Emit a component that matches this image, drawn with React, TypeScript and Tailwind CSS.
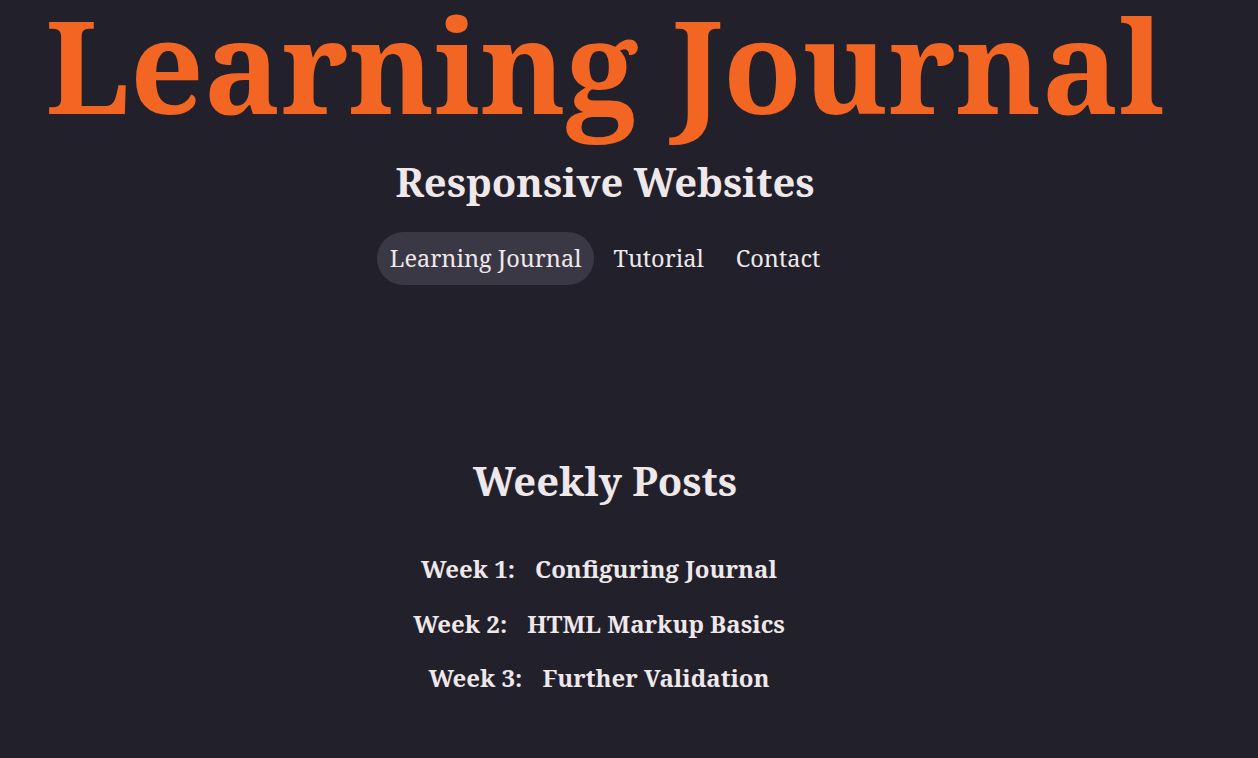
const serif = { fontFamily: '"Noto Serif", Georgia, "DejaVu Serif", serif' };

const posts = [
  { week: 'Week 1:', title: 'Configuring Journal' },
  { week: 'Week 2:', title: 'HTML Markup Basics' },
  { week: 'Week 3:', title: 'Further Validation' },
];

export default function App() {
  return (
    <div style={serif} className="bg-[#22202a] min-h-screen text-[#efe8ea]">
      <div className="flex flex-col items-center pr-[48px]">
        <h1 className="pb-[36px] text-[129px] leading-[128px] font-bold text-[#f26522] whitespace-nowrap">
          Learning Journal
        </h1>
        <h2 className="text-[40px] leading-[36px] font-bold">Responsive Websites</h2>
        <nav className="mt-[32px] flex gap-[6px] text-[23.5px] leading-[33px]">
          <a className="px-[13px] py-[10px] rounded-full bg-[#3b3845]">Learning Journal</a>
          <a className="px-[13px] py-[10px] rounded-full">Tutorial</a>
          <a className="px-[13px] py-[10px] rounded-full">Contact</a>
        </nav>
        <h2 className="mt-[172px] text-[40px] leading-[48px] font-bold">Weekly Posts</h2>
        <ul className="mt-[48px] flex flex-col items-center gap-[22.5px] pr-[12px] text-[24px] leading-[32px] font-bold">
          {posts.map((p) => (
            <li key={p.week} className="flex gap-[20px]">
              <span>{p.week}</span>
              <span>{p.title}</span>
            </li>
          ))}
        </ul>
      </div>
    </div>
  );
}
